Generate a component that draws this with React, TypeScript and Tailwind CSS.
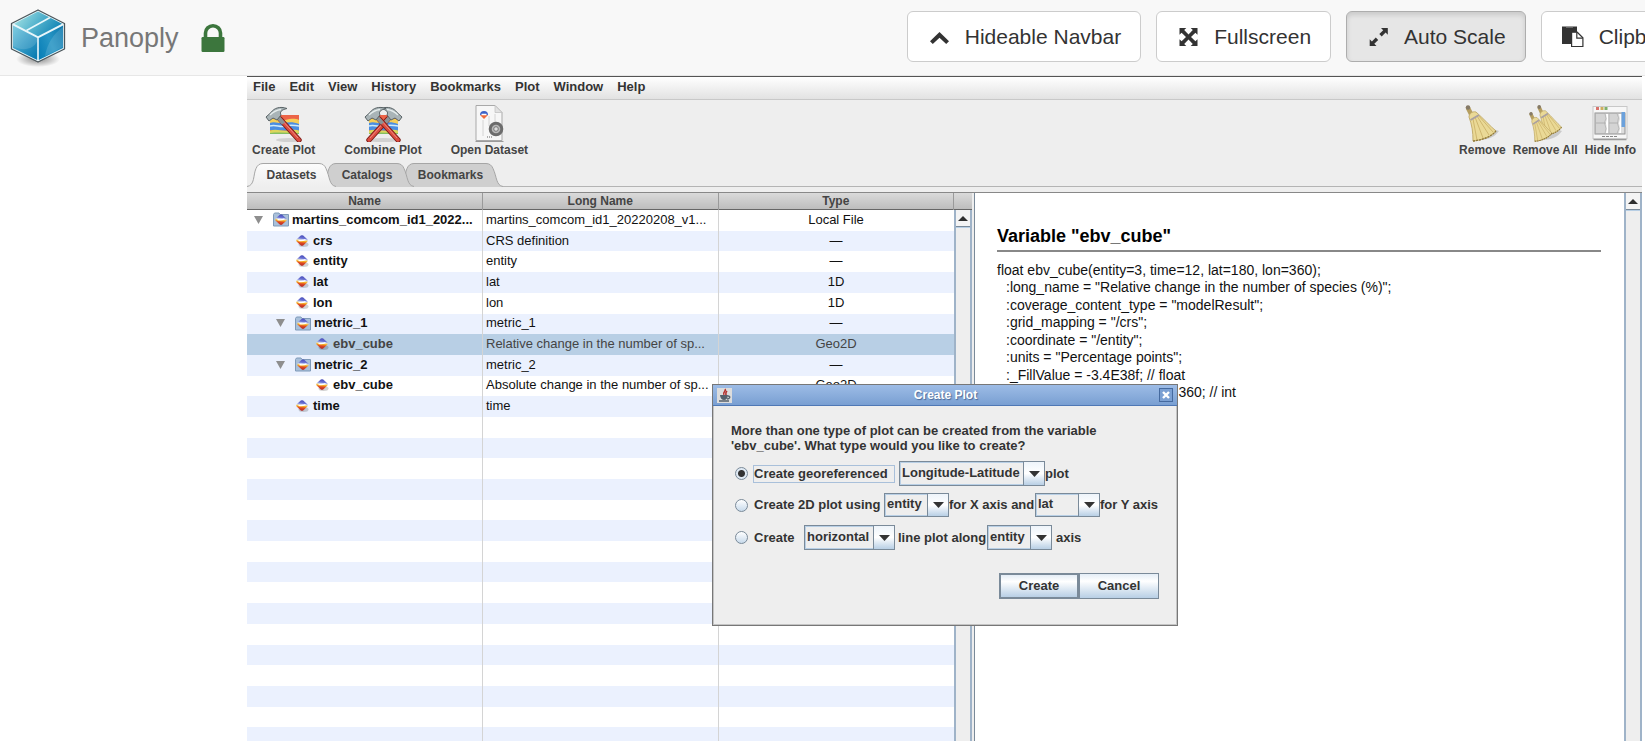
import { useState, type ReactNode } from 'react';

const menus = ['File', 'Edit', 'View', 'History', 'Bookmarks', 'Plot', 'Window', 'Help'];

type Row = {
  name: string;
  longName: string;
  type: string;
  level: 0 | 1 | 2;
  group?: boolean;
  selected?: boolean;
};

const rows: Row[] = [
  { name: 'martins_comcom_id1_2022...', longName: 'martins_comcom_id1_20220208_v1...', type: 'Local File', level: 0, group: true },
  { name: 'crs', longName: 'CRS definition', type: '—', level: 1 },
  { name: 'entity', longName: 'entity', type: '—', level: 1 },
  { name: 'lat', longName: 'lat', type: '1D', level: 1 },
  { name: 'lon', longName: 'lon', type: '1D', level: 1 },
  { name: 'metric_1', longName: 'metric_1', type: '—', level: 1, group: true },
  { name: 'ebv_cube', longName: 'Relative change in the number of sp...', type: 'Geo2D', level: 2, selected: true },
  { name: 'metric_2', longName: 'metric_2', type: '—', level: 1, group: true },
  { name: 'ebv_cube', longName: 'Absolute change in the number of sp...', type: 'Geo2D', level: 2 },
  { name: 'time', longName: 'time', type: '', level: 1 },
];

const emptyRows = Array.from({ length: 16 }, (_, i) => i + rows.length);

const attributes = [
  ':long_name = "Relative change in the number of species (%)";',
  ':coverage_content_type = "modelResult";',
  ':grid_mapping = "/crs";',
  ':coordinate = "/entity";',
  ':units = "Percentage points";',
  ':_FillValue = -3.4E38f; // float',
  ':_ChunkSizes = 1, 12, 180, 360; // int',
];

function CubeLogo() {
  return (
    <svg className="h-[60px] w-[58px]" viewBox="0 0 58 60" aria-hidden="true">
      <defs>
        <linearGradient id="cubeTop" x1="0" y1="0.3" x2="1" y2="0.7">
          <stop offset="0" stopColor="#9fe0e2" />
          <stop offset="0.5" stopColor="#4fb0cc" />
          <stop offset="1" stopColor="#0b7fb2" />
        </linearGradient>
        <linearGradient id="cubeLeft" x1="0" y1="0" x2="0.8" y2="1">
          <stop offset="0" stopColor="#6cc6dc" />
          <stop offset="0.5" stopColor="#3a9fc8" />
          <stop offset="1" stopColor="#0c7db2" />
        </linearGradient>
        <linearGradient id="cubeRight" x1="0" y1="0.8" x2="1" y2="0.2">
          <stop offset="0" stopColor="#0a80b8" />
          <stop offset="0.5" stopColor="#2795c4" />
          <stop offset="1" stopColor="#0f7bb0" />
        </linearGradient>
        <radialGradient id="cubeShade">
          <stop offset="0" stopColor="#000" stopOpacity="0.45" />
          <stop offset="1" stopColor="#000" stopOpacity="0" />
        </radialGradient>
      </defs>
      <ellipse cx="29" cy="51" rx="22" ry="8" fill="url(#cubeShade)" />
      <path d="M29 2 55.500 15.500V41L29 54 2.500 41V15.500Z" fill="#e8f6fa" stroke="#4b565b" strokeWidth="1.300" strokeLinejoin="round" />
      <path d="M29 3.500 53 15.800 29 28.200 5 15.800Z" fill="url(#cubeTop)" />
      <path d="M4 17.500 28.200 30V52L4 40Z" fill="url(#cubeLeft)" />
      <path d="M54 17.500 29.800 30V52L54 40Z" fill="url(#cubeRight)" />
      <path d="M4 17.500 28.200 30V33C25 41 14 44 4 38Z" fill="#fff" opacity="0.13" />
      <path d="M54 19 54 39 36 48C38 36 44 26 54 19Z" fill="#fff" opacity="0.13" />
      <path d="M17.500 22.500 41 9.500" stroke="#e8f8fb" strokeWidth="1.600" />
    </svg>
  );
}

function LockIcon() {
  return (
    <svg className="h-7 w-6" viewBox="0 0 24 28" aria-hidden="true">
      <path d="M4.500 14V9a7.500 7.200 0 0 1 15 0v5" fill="none" stroke="#3c763d" strokeWidth="3.600" />
      <rect x="0.500" y="13" width="23" height="15" rx="1.200" fill="#3c763d" />
    </svg>
  );
}

function ChevronIcon() {
  return (
    <svg className="h-[22px] w-[22px]" viewBox="0 0 22 22" fill="#333" aria-hidden="true">
      <path d="M11.500 6 21 15.200 18.200 18 11.500 11.700 4.800 18 2 15.200Z" />
    </svg>
  );
}

function FullscreenIcon() {
  return (
    <svg className="h-[22px] w-[22px]" viewBox="0 0 22 22" fill="#333" aria-hidden="true">
      <path d="M2.500 2h6.800L7.200 4.100 11.500 8.500 15.800 4.100 13.700 2h6.800v6.800l-2.100-2.100L14 11l4.400 4.300 2.100-2.100V20h-6.800l2.100-2.100-4.300-4.400-4.300 4.400L9.300 20H2.500v-6.800l2.100 2.100L9 11 4.600 6.700 2.500 8.800Z" />
    </svg>
  );
}

function ResizeIcon() {
  return (
    <svg className="h-[22px] w-[22px]" viewBox="0 0 22 22" fill="#333" aria-hidden="true">
      <path d="M14 2h6.800v6.800l-2.200-2.200-3.900 3.900-2.400-2.400 3.900-3.900ZM9.500 20H2.700v-6.800l2.200 2.200 3.900-3.900 2.400 2.400-3.900 3.900Z" />
    </svg>
  );
}

function PasteIcon() {
  return (
    <svg className="h-[22px] w-[22px]" viewBox="0 0 22 22" aria-hidden="true">
      <path d="M0 0.500h15V18H0Z" fill="#333" />
      <path d="M4 1.500h7" stroke="#777" strokeWidth="0.800" />
      <path d="M9.600 6.200h5.600l5.700 5.600v8.700H9.600Z" fill="#fff" stroke="#333" strokeWidth="1.200" />
      <path d="M14.800 6.200v6h6" fill="none" stroke="#333" strokeWidth="1.200" />
    </svg>
  );
}

function NavButton({ icon, active, children }: { icon: ReactNode; active?: boolean; children: ReactNode }) {
  return (
    <button
      type="button"
      aria-pressed={active}
      className={
        active
          ? 'flex h-[51px] shrink-0 items-center gap-[15px] rounded-md border border-[#adadad] bg-[#e6e6e6] pr-[19px] pl-5 text-[21px] text-[#333] shadow-[inset_0_3px_5px_rgba(0,0,0,0.125)]'
          : 'flex h-[51px] shrink-0 items-center gap-[15px] rounded-md border border-[#ccc] bg-white pr-[19px] pl-5 text-[21px] text-[#333]'
      }
    >
      {icon}
      {children}
    </button>
  );
}

function PlotStripes() {
  return (
    <g>
      <rect x="5" y="9" width="29" height="19" fill="#ec6448" />
      <path d="M5 13c6-2 9 2 15 1s9-2 14 0v4c-10 2-20-1-29 1Z" fill="#f6cf58" />
      <path d="M5 17c5-2 9 1 14 0s10-1 15 1v7c-9-2-18 1-29-1Z" fill="#4b8ee2" />
      <path d="M5 20c6-2 10 2 16 0s9 0 13 0" stroke="#cfeaf8" strokeWidth="1.600" fill="none" />
      <path d="M5 24.500c7-2 12 1 18 0s8-1 11 0V28H5Z" fill="#dcd65c" />
      <path d="M5 27c9-1 19 0 29 0v1H5Z" fill="#84bf62" />
    </g>
  );
}

function Hammer() {
  return (
    <g>
      <path d="M15 13 34 34" stroke="#7d1c18" strokeWidth="5.400" strokeLinecap="round" />
      <path d="M15 13 34 34" stroke="#dc4c40" strokeWidth="3.400" strokeLinecap="round" />
      <path d="M17 14 33 32" stroke="#f0948a" strokeWidth="0.900" />
      <path d="M11 9 18.500 17.500" stroke="#8b9497" strokeWidth="4" />
      <path d="M1 11 6 6.500c3-4.500 9-6.500 16-4C16 4 14.500 6 16 9l-4 5-4-2-4 3Z" fill="#a9b4b7" stroke="#596366" strokeWidth="1" />
      <path d="M5 9c4-4 7-5 11-5.500" stroke="#e6eded" strokeWidth="1.300" fill="none" />
    </g>
  );
}

function CreatePlotIcon() {
  return (
    <svg className="h-[38px] w-10" viewBox="-1 -2 40 38" aria-hidden="true">
      <ellipse cx="24" cy="34" rx="13" ry="2" fill="#000" opacity="0.12" />
      <PlotStripes />
      <Hammer />
    </svg>
  );
}

function CombinePlotIcon() {
  return (
    <svg className="h-[38px] w-10" viewBox="-1 -2 40 38" aria-hidden="true">
      <ellipse cx="19" cy="34" rx="17" ry="2" fill="#000" opacity="0.12" />
      <PlotStripes />
      <g transform="matrix(-1 0 0 1 39 0)">
        <Hammer />
      </g>
      <Hammer />
    </svg>
  );
}

function OpenDatasetIcon() {
  return (
    <svg className="h-[38px] w-10" viewBox="0 0 40 38" aria-hidden="true">
      <path d="M6.500 37.500h28" stroke="#9a9a9a" strokeWidth="1" />
      <path d="M7 1.500h19l7 7v28H7Z" fill="#f7f7f7" stroke="#a9a9a9" />
      <path d="M26 1.500v7h7Z" fill="#e2e2e2" stroke="#bdbdbd" strokeWidth="0.700" />
      <path d="M11 11a4 4 0 0 1 8 0Z" fill="#3d62c7" />
      <path d="M11 11h8l-4 4Z" fill="#ee6c3d" />
      <path d="M12.500 10.500h5" stroke="#fff" strokeWidth="1.500" />
      <path d="M14 16v16M20 12v10M26 10v8" stroke="#d4d4d4" />
      <circle cx="27" cy="25" r="5.800" fill="#b9b9b9" stroke="#6c6c6c" strokeWidth="3" />
      <circle cx="27" cy="25" r="2.300" fill="#e0e0e0" stroke="#777" />
      <path d="M18 33h5" stroke="#666" strokeDasharray="1 1" />
    </svg>
  );
}

function Broom() {
  return (
    <g>
      <path d="M4 4 7 10" stroke="#b59e60" strokeWidth="4.500" strokeLinecap="round" />
      <circle cx="4" cy="3.500" r="2.200" fill="#857a68" />
      <path d="M5 13C5 10 8 7 12 8 20 15 26 22 32 27 27 33 19 36 9 37 9 28 8 21 5 13Z" fill="#ead996" stroke="#bfa865" strokeWidth="0.900" />
      <path d="M9 15 13 36M11 13 19 34M13 12 25 31M14 11 29 28" stroke="#ccb26a" strokeWidth="0.900" />
      <path d="M6.500 16 15 11" stroke="#aaa0a0" strokeWidth="2" />
      <path d="M9 37C18 36 27 33 32 27" stroke="#8f7838" strokeWidth="1.300" fill="none" strokeDasharray="2 1" />
    </g>
  );
}

function RemoveIcon() {
  return (
    <svg className="h-[38px] w-9" viewBox="0 0 36 38" aria-hidden="true">
      <path d="M14 36c10 0 17-3 21-9l-6-2Z" fill="#000" opacity="0.15" />
      <Broom />
    </svg>
  );
}

function RemoveAllIcon() {
  return (
    <svg className="h-[38px] w-9" viewBox="0 0 36 38" aria-hidden="true">
      <path d="M14 36c10 0 17-3 21-9l-6-2Z" fill="#000" opacity="0.15" />
      <g transform="translate(9 0) scale(0.800 0.860)">
        <Broom />
      </g>
      <g transform="translate(1 7) scale(0.750 0.820)">
        <Broom />
      </g>
    </svg>
  );
}

function HideInfoIcon() {
  return (
    <svg className="h-[38px] w-9" viewBox="0 0 36 38" aria-hidden="true">
      <path d="M1.500 35.500h33" stroke="#999" strokeWidth="1.500" />
      <rect x="1" y="2.500" width="34" height="32" fill="#f7f7f7" stroke="#c8c8c8" />
      <rect x="4" y="3" width="3" height="3" fill="#d9736b" />
      <rect x="8.500" y="3" width="3" height="3" fill="#cfae5e" />
      <rect x="12.500" y="3" width="3" height="3" fill="#7fb06c" />
      <rect x="3" y="9" width="30" height="21" fill="#dedede" stroke="#929292" />
      <path d="M3.500 9.500H13l1 5-1.500 4 1.500 6-1 5H3.500Z" fill="#d4d4d4" stroke="#aaa" strokeWidth="0.700" />
      <path d="M17 9.500h8l1.500 4-1 6 1.500 5-2 5h-8Z" fill="#d4d4d4" stroke="#aaa" strokeWidth="0.700" />
      <path d="M14 10h2v19h-2l1-4-1-6 1-4ZM27 10h2v19h-2l1-4-1-6 1-4Z" fill="#fff" />
      <path d="M4 19h10M17 19h9" stroke="#b0b0b0" />
      <rect x="29.500" y="8" width="3.500" height="15" fill="#6ba1dc" />
      <path d="M10 32.500h16" stroke="#888" strokeDasharray="3 1" />
    </svg>
  );
}

function IconDefs() {
  return (
    <svg className="absolute h-0 w-0" aria-hidden="true">
      <defs>
        <linearGradient id="bands" x1="0.550" y1="0" x2="0.450" y2="1">
          <stop offset="0" stopColor="#4448b8" />
          <stop offset="0.300" stopColor="#6d74d4" />
          <stop offset="0.400" stopColor="#c3cdf2" />
          <stop offset="0.480" stopColor="#f3dc8c" />
          <stop offset="0.580" stopColor="#f6a91c" />
          <stop offset="0.720" stopColor="#e04a24" />
          <stop offset="1" stopColor="#b02424" />
        </linearGradient>
        <linearGradient id="tabOn" x1="0" y1="0" x2="0" y2="1">
          <stop offset="0" stopColor="#fcfcfc" />
          <stop offset="1" stopColor="#eeeeee" />
        </linearGradient>
      </defs>
    </svg>
  );
}

const diamondPath = 'M4.800 0.600Q6 -0.200 7.200 0.600L11.300 4.300Q12.300 5.500 11.300 6.600L7.200 10.400Q6 11.300 4.800 10.400L0.700 6.600Q-0.300 5.500 0.700 4.300Z';

function VariableIcon() {
  return (
    <svg className="h-[14px] w-[13px] shrink-0" viewBox="0 0 13 14" aria-hidden="true">
      <ellipse cx="7.500" cy="10.500" rx="5" ry="2.500" fill="#000" opacity="0.18" />
      <path d={diamondPath} transform="translate(0 1)" fill="url(#bands)" />
      <path d="M2.500 6.300Q6 7.200 9.500 5.600" stroke="#fff" strokeWidth="1.300" fill="none" />
    </svg>
  );
}

function GroupIcon() {
  return (
    <svg className="h-[15px] w-4 shrink-0" viewBox="0 0 16 15" aria-hidden="true">
      <path d="M0.500 2.500 1.500 1H6l1 1.500h8.500V14H0.500Z" fill="#a9c0da" stroke="#7f9ab9" />
      <path d={diamondPath} transform="translate(2 2.200)" fill="url(#bands)" />
      <path d="M4.500 7.500Q8 8.400 11.500 6.800" stroke="#fff" strokeWidth="1.300" fill="none" />
    </svg>
  );
}

function TreeCell({ row }: { row: Row }) {
  const pad = row.group
    ? row.level === 0
      ? 'flex items-center pl-[6px]'
      : 'flex items-center pl-7'
    : row.level === 1
      ? 'flex items-center pl-[49px]'
      : 'flex items-center pl-[69px]';
  return (
    <div className={pad}>
      {row.group ? (
        <>
          <svg className="mr-[9px] h-[10px] w-[11px] shrink-0" viewBox="0 0 11 10" aria-hidden="true">
            <path d="M1 1h9L5.500 9Z" fill="#8e8e8e" />
          </svg>
          <GroupIcon />
          <span className="ml-[3px]">{row.name}</span>
        </>
      ) : (
        <>
          <VariableIcon />
          <span className="ml-1">{row.name}</span>
        </>
      )}
    </div>
  );
}

function ToolButton({ icon, label }: { icon: ReactNode; label: string }) {
  return (
    <button type="button" className="flex flex-col items-center whitespace-nowrap text-xs leading-4 font-bold text-[#444]">
      {icon}
      {label}
    </button>
  );
}

function Tab({ label, width, active, stack }: { label: string; width: number; active?: boolean; stack: string }) {
  const w = width;
  const outline = `M0 23.500C8 22.500 6 12 9 5.500Q11 0.500 16 0.500H${w - 17}Q${w - 12} 0.500 ${w - 10} 5.500C${w - 6} 14 ${w - 7} 22.500 ${w} 23.500`;
  return (
    <button type="button" role="tab" aria-selected={!!active} className={stack} style={{ width: w }}>
      <svg className="absolute inset-0 h-6 w-full" viewBox={`0 0 ${w} 24`} aria-hidden="true">
        <path d={`${outline}V24H0Z`} fill={active ? 'url(#tabOn)' : '#cfcfcf'} />
        <path d={outline} fill="none" stroke="#a6a6a6" />
      </svg>
      <span className="relative">{label}</span>
    </button>
  );
}

function ScrollUp() {
  return (
    <div className="flex w-[18px] shrink-0 flex-col border-x-2 border-x-[#9fb3c8] bg-[#eee]">
      <button type="button" aria-label="Scroll up" className="flex h-[17px] items-center justify-center border-b border-[#7a8a99] bg-[#f4f4f4]">
        <svg className="h-[5px] w-[10px]" viewBox="0 0 10 5" aria-hidden="true">
          <path d="M5 0 10 5H0Z" fill="#2f2f2f" />
        </svg>
      </button>
      <div className="flex-1 border-t border-[#b8cfe5]" />
    </div>
  );
}

function Combo({ label, value, size }: { label: string; value: string; size: string }) {
  return (
    <span className={size}>
      <select aria-label={label} defaultValue={value} className="h-full w-full appearance-none border border-[#7a8a99] bg-[#eee] pb-[2px] pl-[2px] text-[13px] leading-4 font-bold text-[#333] shadow-[inset_0_0_0_1px_#b8cfe5] outline-none">
        <option>{value}</option>
      </select>
      <span className="pointer-events-none absolute inset-y-0 right-0 flex w-[22px] items-center justify-center border border-[#7a8a99] bg-linear-to-b from-[#eef4fa] via-white to-[#b8cfe5]">
        <svg className="h-[6px] w-[11px]" viewBox="0 0 11 6" aria-hidden="true">
          <path d="M0 0H11L5.500 6Z" fill="#333" />
        </svg>
      </span>
    </span>
  );
}

const radioClass =
  'h-[13px] w-[13px] shrink-0 appearance-none rounded-full border border-[#7a8a99] bg-linear-to-b from-white to-[#c8daeb] checked:bg-[radial-gradient(circle,#333_0,#333_3px,#dfe9f3_4px)]';

function CreatePlotDialog() {
  const [kind, setKind] = useState('geo');
  return (
    <div
      role="dialog"
      aria-label="Create Plot"
      className="absolute top-[307px] left-[465px] w-[466px] border border-[#777] bg-[#eee] pb-[26px] text-[13px] font-bold text-[#333] shadow-[inset_0_0_0_1px_#c4c4c4]"
    >
      <div className="flex h-[21px] items-center justify-between border-b border-[#4f78b5] bg-linear-to-b from-[#9dbce6] to-[#799fd2] px-1">
        <svg className="h-[15px] w-[15px]" viewBox="0 0 15 15" aria-hidden="true">
          <rect width="15" height="15" fill="#dcdcdc" />
          <path d="M8 1c2 2-3 3-1 6M10 3c-2 2-1 3-1 4" stroke="#b52f2c" strokeWidth="1.600" fill="none" />
          <path d="M3 7h8c0 3-2 5-4 5s-4-2-4-5Z" fill="#55606b" />
          <path d="M11 8c3 0 2 3-1 3M2 13h10" stroke="#55606b" strokeWidth="1.300" fill="none" />
        </svg>
        <span className="text-xs text-white [text-shadow:1px_1px_1px_#4a6a99]">Create Plot</span>
        <button type="button" aria-label="Close" className="flex h-[14px] w-[14px] items-center justify-center border border-[#456a9f] bg-[#7ba0d3]">
          <svg className="h-2 w-2" viewBox="0 0 8 8" aria-hidden="true">
            <path d="M1 1 7 7M7 1 1 7" stroke="#fff" strokeWidth="2.400" />
          </svg>
        </button>
      </div>
      <p className="mt-[17px] ml-[18px] leading-[15px]">
        More than one type of plot can be created from the variable
        <br />
        'ebv_cube'. What type would you like to create?
      </p>
      <div className="mt-2 ml-[22px] flex h-[25px] items-center whitespace-nowrap">
        <input id="geo" type="radio" name="kind" className={radioClass} checked={kind === 'geo'} onChange={() => setKind('geo')} />
        <label htmlFor="geo" className="ml-[5px] w-[142px] border border-[#a9c0da] leading-4">
          Create georeferenced
        </label>
        <Combo label="Projection" value="Longitude-Latitude" size="relative ml-1 h-[25px] w-[146px]" />
        <span>plot</span>
      </div>
      <div className="mt-[7px] ml-[22px] flex h-6 items-center whitespace-nowrap">
        <input id="two" type="radio" name="kind" className={radioClass} checked={kind === 'two'} onChange={() => setKind('two')} />
        <label htmlFor="two" className="ml-[6px] w-[130px]">
          Create 2D plot using
        </label>
        <Combo label="X axis" value="entity" size="relative h-6 w-[65px]" />
        <span className="w-[86px]">for X axis and</span>
        <Combo label="Y axis" value="lat" size="relative h-6 w-[65px]" />
        <span>for Y axis</span>
      </div>
      <div className="mt-2 ml-[22px] flex h-[25px] items-center whitespace-nowrap">
        <input id="line" type="radio" name="kind" className={radioClass} checked={kind === 'line'} onChange={() => setKind('line')} />
        <label htmlFor="line" className="ml-[6px] w-[50px]">
          Create
        </label>
        <Combo label="Direction" value="horizontal" size="relative h-[25px] w-[91px]" />
        <span className="ml-[3px] w-[89px]">line plot along</span>
        <Combo label="Line axis" value="entity" size="relative h-[25px] w-[65px]" />
        <span className="ml-1">axis</span>
      </div>
      <div className="mt-[23px] mr-[18px] flex justify-end">
        <button type="button" className="h-[26px] w-20 border-2 border-[#7a8a99] bg-linear-to-b from-[#e4edf6] via-white via-30% to-[#b8cfe5]">
          Create
        </button>
        <button type="button" className="h-[26px] w-20 border border-[#7a8a99] bg-linear-to-b from-[#e4edf6] via-white via-30% to-[#b8cfe5]">
          Cancel
        </button>
      </div>
    </div>
  );
}

const headCell = 'border-r border-[#9a9a9a] p-0 pt-px text-xs leading-[15px] font-bold text-[#444]';

export default function App() {
  return (
    <div className="relative flex h-screen flex-col overflow-hidden bg-white font-['Liberation_Sans',Arial,sans-serif]">
      <IconDefs />
      <header className="flex h-[76px] shrink-0 items-start overflow-hidden border-b border-[#e7e7e7] bg-[#f8f8f8]">
        <div className="flex w-[55%] shrink-0 items-center pt-2 pl-[9px]">
          <CubeLogo />
          <a href="#panoply" className="mr-[22px] ml-[14px] text-[27px] leading-8 text-[#777]">
            Panoply
          </a>
          <LockIcon />
        </div>
        <nav className="flex shrink-0 gap-[15px] pt-[11px] pl-[2px]">
          <NavButton icon={<ChevronIcon />}>Hideable Navbar</NavButton>
          <NavButton icon={<FullscreenIcon />}>Fullscreen</NavButton>
          <NavButton icon={<ResizeIcon />} active>
            Auto Scale
          </NavButton>
          <NavButton icon={<PasteIcon />}>Clipboard</NavButton>
        </nav>
      </header>

      <main className="relative mr-[3px] ml-[247px] flex min-h-0 flex-1 flex-col border-t border-[#555] bg-[#eee]">
        <div role="menubar" className="flex h-[23px] shrink-0 items-center gap-[14px] border-b border-[#c8c8c8] bg-linear-to-b from-white to-[#e2e2e2] pb-[3px] pl-[6px] text-[13px] leading-4 font-bold text-[#333]">
          {menus.map((m) => (
            <button key={m} type="button" role="menuitem">
              {m}
            </button>
          ))}
        </div>

        <div className="flex shrink-0 justify-between pt-1 pr-[6px] pb-[5px] pl-[5px]">
          <div className="flex gap-[29px]">
            <ToolButton icon={<CreatePlotIcon />} label="Create Plot" />
            <ToolButton icon={<CombinePlotIcon />} label="Combine Plot" />
            <ToolButton icon={<OpenDatasetIcon />} label="Open Dataset" />
          </div>
          <div className="flex gap-[7px]">
            <ToolButton icon={<RemoveIcon />} label="Remove" />
            <ToolButton icon={<RemoveAllIcon />} label="Remove All" />
            <ToolButton icon={<HideInfoIcon />} label="Hide Info" />
          </div>
        </div>

        <div role="tablist" className="flex h-6 shrink-0 bg-[linear-gradient(#b4b4b4,#b4b4b4)] bg-[length:100%_1px] bg-bottom bg-no-repeat text-xs leading-6 font-bold text-[#444]">
          <Tab label="Datasets" width={89} active stack="relative z-30" />
          <Tab label="Catalogs" width={94} stack="relative z-20 -ml-4" />
          <Tab label="Bookmarks" width={105} stack="relative z-10 -ml-4" />
        </div>

        <div className="mt-[5px] flex min-h-0 flex-1 border-t border-[#888]">
          <div className="flex w-[725px] shrink-0 overflow-hidden">
            <div className="min-w-0 flex-1 overflow-hidden bg-white">
              <table className="h-[555px] w-full table-fixed border-collapse text-[13px] leading-4">
                <colgroup>
                  <col className="w-1/3" />
                  <col className="w-1/3" />
                  <col className="w-1/3" />
                </colgroup>
                <thead>
                  <tr className="h-4 border-b border-[#666] bg-linear-to-b from-[#dadada] to-[#bdbdbd]">
                    <th className={headCell}>Name</th>
                    <th className={headCell}>Long Name</th>
                    <th className={headCell}>Type</th>
                  </tr>
                </thead>
                <tbody>
                  {rows.map((r, i) => (
                    <tr
                      key={i}
                      aria-selected={!!r.selected}
                      className={r.selected ? 'bg-[#b8cfe5] text-[#444]' : i % 2 ? 'bg-[#ebf1fe] text-[#111]' : 'bg-white text-[#111]'}
                    >
                      <td className="overflow-hidden border-r border-[#d4d4d4] p-0 pb-px font-bold whitespace-nowrap">
                        <TreeCell row={r} />
                      </td>
                      <td className="overflow-hidden border-r border-[#d4d4d4] p-0 pb-px pl-[3px] whitespace-nowrap">{r.longName}</td>
                      <td className="p-0 pb-px text-center">{r.type}</td>
                    </tr>
                  ))}
                  {emptyRows.map((i) => (
                    <tr key={i} className={i % 2 ? 'bg-[#ebf1fe]' : 'bg-white'}>
                      <td className="border-r border-[#d4d4d4] p-0 pb-px">&nbsp;</td>
                      <td className="border-r border-[#d4d4d4] p-0" />
                      <td className="p-0" />
                    </tr>
                  ))}
                </tbody>
              </table>
            </div>
            <div className="flex flex-col">
              <div className="h-[17px] w-[18px] shrink-0 border-b border-[#666] bg-linear-to-b from-[#dadada] to-[#bdbdbd]" />
              <div className="flex flex-1">
                <ScrollUp />
              </div>
            </div>
          </div>

          <section className="ml-[2px] flex min-w-0 flex-1 border-l border-[#7a8a99] bg-white">
            <div className="min-w-0 flex-1 pt-8 pr-[23px] pl-[22px] text-sm text-[#111]">
              <h1 className="border-b-2 border-[#888] pb-[3px] text-lg leading-[22px] font-bold text-black">Variable "ebv_cube"</h1>
              <div className="mt-[9px] grid h-[140px] auto-rows-fr items-center leading-4 whitespace-nowrap">
                <p>float ebv_cube(entity=3, time=12, lat=180, lon=360);</p>
                {attributes.map((a) => (
                  <p key={a} className="pl-[9px]">
                    {a}
                  </p>
                ))}
              </div>
            </div>
            <ScrollUp />
          </section>
        </div>

        <CreatePlotDialog />
      </main>
    </div>
  );
}
